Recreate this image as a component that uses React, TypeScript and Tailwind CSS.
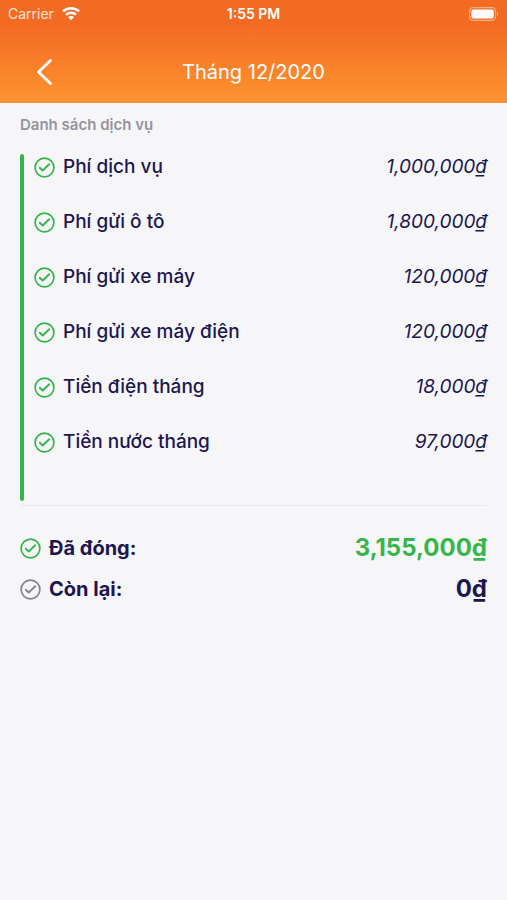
type CheckIconProps = {
    className: string;
};

const services = [
    { name: "Phí dịch vụ", amount: 1000000 },
    { name: "Phí gửi ô tô", amount: 1800000 },
    { name: "Phí gửi xe máy", amount: 120000 },
    { name: "Phí gửi xe máy điện", amount: 120000 },
    { name: "Tiền điện tháng", amount: 18000 },
    { name: "Tiền nước tháng", amount: 97000 },
];

function formatAmount(amount: number) {
    return `${amount.toLocaleString("en-US")}₫`;
}

function CheckIcon({ className }: CheckIconProps) {
    return (
        <svg className={className} viewBox="0 0 21 21" fill="none" stroke="currentColor" aria-hidden="true">
            <circle cx="10.5" cy="10.5" r="9.4" strokeWidth="1.7" />
            <path d="M5.8 10.8 8.7 13.5 15.2 7.3" strokeWidth="1.9" strokeLinecap="round" strokeLinejoin="round" />
        </svg>
    );
}

function StatusBar() {
    return (
        <div className="grid h-7 grid-cols-3 items-center px-2 text-sm text-white">
            <div className="flex items-center gap-2 text-white/80">
                <span>Carrier</span>
                <svg className="h-4 w-[18px] text-white" viewBox="0 0 18 16" fill="none" stroke="currentColor" aria-label="Wi-Fi">
                    <path d="M1 5.4a11.6 11.6 0 0 1 16 0" strokeWidth="2.6" />
                    <path d="M4 8.8a7.2 7.2 0 0 1 10 0" strokeWidth="2.4" />
                    <path d="M9 14.2 6.1 11.2a4.2 4.2 0 0 1 5.8 0Z" fill="currentColor" stroke="none" />
                </svg>
            </div>
            <span className="text-center font-semibold">1:55 PM</span>
            <svg className="h-[14px] w-[30px] justify-self-end" viewBox="0 0 30 14" fill="none" aria-label="Battery">
                <rect x="0.6" y="0.6" width="26" height="12.8" rx="3.6" stroke="white" strokeOpacity="0.45" strokeWidth="1.2" />
                <rect x="2.4" y="2.4" width="22.4" height="9.2" rx="2" fill="white" />
                <path d="M28 4.8c1.6.6 1.6 3.8 0 4.4Z" fill="white" fillOpacity="0.5" />
            </svg>
        </div>
    );
}

export default function App() {
    return (
        <div className="min-h-screen bg-[#f6f6f9] font-['Inter','Noto_Sans',sans-serif] text-[#1d174f]">
            <header className="bg-linear-to-b from-[#f36b23] from-25% to-[#fd9430]">
                <StatusBar />
                <div className="grid h-[75px] grid-cols-[48px_1fr_48px] items-center px-5 pt-3">
                    <button type="button" aria-label="Quay lại" className="flex h-11 items-center justify-center text-white">
                        <svg className="h-7 w-4" viewBox="0 0 16 28" fill="none" stroke="currentColor" aria-hidden="true">
                            <path d="M14.5 2.5 2.5 14 14.5 25.5" strokeWidth="2.8" strokeLinecap="round" strokeLinejoin="round" />
                        </svg>
                    </button>
                    <h1 className="text-center text-xl text-white">Tháng 12/2020</h1>
                </div>
            </header>

            <main className="px-5 pt-3">
                <h2 className="text-[15px] leading-5 font-semibold text-[#94949e]">Danh sách dịch vụ</h2>

                <div className="mt-[19px] flex gap-[10px] border-b border-[#e8e8ec] pb-1">
                    <div className="w-1 rounded-full bg-[#36b54a]" />
                    <ul className="flex-1 pt-px pb-4">
                        {services.map((service) => (
                            <li key={service.name} className="flex h-[55px] items-start justify-between">
                                <div className="flex items-center gap-2">
                                    <CheckIcon className="size-[21px] text-[#36b54a]" />
                                    <span className="text-[19px] leading-6 font-medium">{service.name}</span>
                                </div>
                                <span className="text-[19px] leading-6 italic">{formatAmount(service.amount)}</span>
                            </li>
                        ))}
                    </ul>
                </div>

                <dl className="mt-7 space-y-[13px]">
                    <div className="flex items-center justify-between">
                        <dt className="flex items-center gap-2 text-xl leading-7 font-bold">
                            <CheckIcon className="size-[21px] text-[#36b54a]" />
                            Đã đóng:
                        </dt>
                        <dd className="text-2xl leading-7 font-bold text-[#36b54a]">{formatAmount(3155000)}</dd>
                    </div>
                    <div className="flex items-center justify-between">
                        <dt className="flex items-center gap-2 text-xl leading-7 font-bold">
                            <CheckIcon className="size-[21px] text-[#858588]" />
                            Còn lại:
                        </dt>
                        <dd className="text-2xl leading-7 font-bold">{formatAmount(0)}</dd>
                    </div>
                </dl>
            </main>
        </div>
    );
}
